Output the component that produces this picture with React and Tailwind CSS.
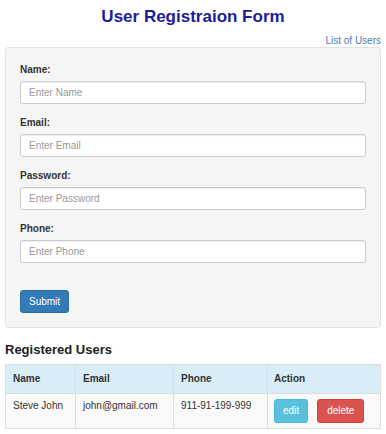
import React from 'react';

const fields = [
  { label: 'Name:', placeholder: 'Enter Name', type: 'text' },
  { label: 'Email:', placeholder: 'Enter Email', type: 'email' },
  { label: 'Password:', placeholder: 'Enter Password', type: 'password' },
  { label: 'Phone:', placeholder: 'Enter Phone', type: 'text' },
];

const users = [{ name: 'Steve John', email: 'john@gmail.com', phone: '911-91-199-999' }];

const App = () => {
  return (
    <div className="min-h-[434px] bg-white px-[5px] font-['Liberation_Sans',Arial,sans-serif] text-[#333]">
      <h1 className="pt-[6px] text-center text-[17px] font-bold leading-[22px] text-[#1c1c9c]">
        User Registraion Form
      </h1>
      <div className="mt-[6px] text-right text-[10px] leading-[13px]">
        <a href="#" className="text-[#4a7bb0]">List of Users</a>
      </div>

      {/* Form panel */}
      <form className="rounded-[3px] border border-[#e3e3e3] bg-[#f5f5f5] px-[14px] pt-[15px] pb-[14px]">
        {fields.map((f) => (
          <div key={f.label} className="mb-[12px]">
            <label className="mb-[4px] block text-[10px] font-bold leading-[14px] text-[#333]">
              {f.label}
            </label>
            <input
              type={f.type}
              placeholder={f.placeholder}
              className="block h-[23px] w-full rounded-[3px] border border-[#ccc] bg-white px-[8px] text-[10px] text-[#555] shadow-[inset_0_1px_1px_rgba(0,0,0,0.075)] outline-none placeholder:text-[#999]"
            />
          </div>
        ))}
        <button
          type="button"
          className="mt-[15px] h-[23px] rounded-[3px] border border-[#2e6da4] bg-[#337ab7] px-[8px] text-[10px] leading-[21px] text-white"
        >
          Submit
        </button>
      </form>

      <h3 className="mt-[14px] mb-[6px] text-[13px] font-bold leading-[16px] text-[#222]">
        Registered Users
      </h3>
      <table className="w-full table-fixed border-collapse border border-[#ddd] text-[10px] leading-[14px]">
        <thead>
          <tr className="bg-[#d9edf7]">
            <th className="w-[70px] border border-[#ddd] px-[7px] py-[7px] text-left font-bold">Name</th>
            <th className="w-[98px] border border-[#ddd] px-[7px] py-[7px] text-left font-bold">Email</th>
            <th className="w-[94px] border border-[#ddd] px-[7px] py-[7px] text-left font-bold">Phone</th>
            <th className="border border-[#ddd] px-[6px] py-[7px] text-left font-bold">Action</th>
          </tr>
        </thead>
        <tbody>
          {users.map((u) => (
            <tr key={u.email} className="bg-[#f9f9f9] align-top">
              <td className="border border-[#ddd] px-[7px] py-[5px]">{u.name}</td>
              <td className="border border-[#ddd] px-[7px] py-[5px]">{u.email}</td>
              <td className="border border-[#ddd] px-[7px] py-[5px]">{u.phone}</td>
              <td className="border border-[#ddd] px-[6px] py-[5px]">
                <div className="flex gap-[9px]">
                  <button className="h-[24px] rounded-[3px] border border-[#46b8da] bg-[#5bc0de] px-[8px] text-[10px] text-white">
                    edit
                  </button>
                  <button className="h-[24px] rounded-[3px] border border-[#d43f3a] bg-[#d9534f] px-[9px] text-[10px] text-white">
                    delete
                  </button>
                </div>
              </td>
            </tr>
          ))}
        </tbody>
      </table>
    </div>
  );
};

export default App;
